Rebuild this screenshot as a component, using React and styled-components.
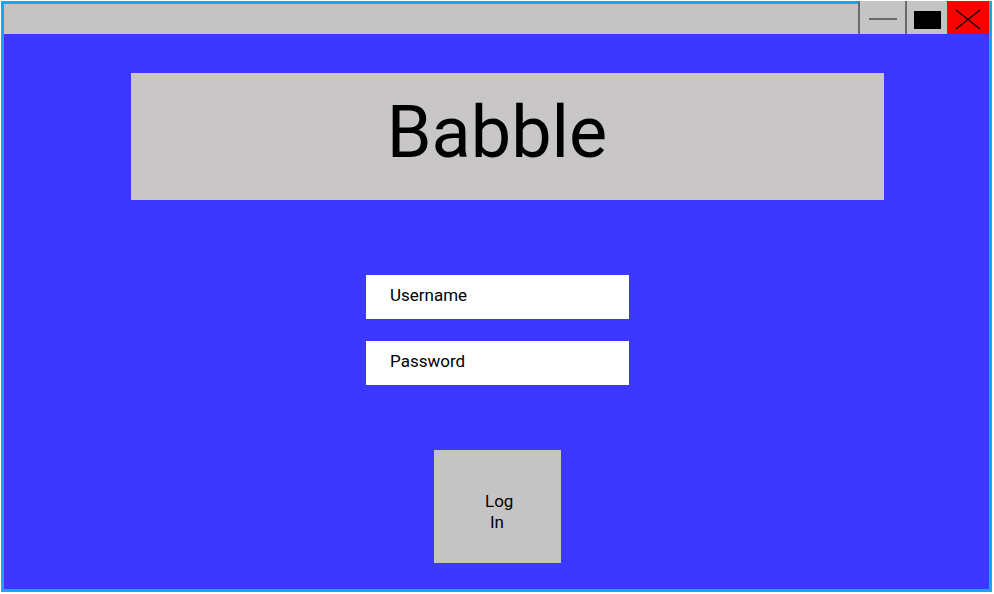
import styled, { createGlobalStyle } from 'styled-components'

const GlobalStyle = createGlobalStyle`
  html, body {
    margin: 0;
    padding: 0;
    background: #ffffff;
  }
  body {
    font-family: Roboto, "Liberation Sans", sans-serif;
  }
`

const Window = styled.div`
  box-sizing: border-box;
  width: 991px;
  height: 591px;
  margin: 1px 0 0 1px;
  border: 3px solid #1ea3f2;
  display: flex;
  flex-direction: column;
`

const TitleBar = styled.div`
  height: 30px;
  flex: none;
  background: #c4c4c4;
  display: flex;
  justify-content: flex-end;
`

const Controls = styled.div`
  display: flex;
  height: 33px;
  margin-top: -3px;
`

const Separator = styled.div`
  width: 2px;
  background: #6a6a6a;
`

const ControlButton = styled.div`
  width: ${p => p.w}px;
  background: ${p => p.bg || '#c4c4c4'};
  display: flex;
  align-items: center;
  justify-content: center;
`

const MinLine = styled.div`
  width: 28px;
  height: 2px;
  margin-top: 3px;
  margin-left: 1px;
  background: #6a6a6a;
`

const MaxBox = styled.div`
  width: 27px;
  height: 18px;
  margin-top: 4px;
  margin-left: 1px;
  background: #000000;
`

const Content = styled.div`
  flex: 1;
  background: #3d38ff;
  display: flex;
  flex-direction: column;
  align-items: center;
`

const Header = styled.div`
  box-sizing: border-box;
  width: 753px;
  height: 127px;
  margin: 39px 0 0 22px;
  padding: 0 21px 8px 0;
  background: #c8c6c7;
  display: flex;
  align-items: center;
  justify-content: center;
  font-size: 72px;
  color: #000000;
`

const Form = styled.form`
  display: flex;
  flex-direction: column;
  align-items: center;
  margin: 75px 0 0 2px;
  gap: 22px;
`

const Field = styled.input`
  box-sizing: border-box;
  width: 263px;
  height: 44px;
  padding: 10px 24px 14px;
  border: 0;
  outline: 0;
  background: #ffffff;
  font-family: Roboto, "Liberation Sans", sans-serif;
  font-size: 17px;
  line-height: 20px;
  color: #000000;
  &::placeholder {
    color: #000000;
    opacity: 1;
  }
`

const LoginButton = styled.button`
  box-sizing: border-box;
  width: 127px;
  height: 113px;
  margin-top: 43px;
  padding: 10px 0 0 56px;
  border: 0;
  background: #c4c4c4;
  font-family: Roboto, "Liberation Sans", sans-serif;
  font-size: 17px;
  line-height: 21px;
  color: #000000;
  display: flex;
  align-items: center;
  justify-content: flex-start;
`

const ButtonLabel = styled.span`
  display: block;
  width: 30px;
  text-align: left;
  text-indent: -5px;
`

const App = () => {
  return (
    <>
      <GlobalStyle />
      <Window>
        <TitleBar>
          <Controls>
            <Separator />
            <ControlButton w={45}>
              <MinLine />
            </ControlButton>
            <Separator />
            <ControlButton w={40}>
              <MaxBox />
            </ControlButton>
            <ControlButton w={42} bg="#ff0000">
              <svg width="42" height="33" viewBox="0 0 42 33">
                <line x1="9" y1="9" x2="33" y2="28" stroke="#000" strokeWidth="1.2" />
                <line x1="33" y1="9" x2="9" y2="28" stroke="#000" strokeWidth="1.2" />
              </svg>
            </ControlButton>
          </Controls>
        </TitleBar>
        <Content>
          <Header>Babble</Header>
          <Form onSubmit={e => e.preventDefault()}>
            <Field type="text" placeholder="Username" />
            <Field type="password" placeholder="Password" />
            <LoginButton type="submit">
              <ButtonLabel>Log In</ButtonLabel>
            </LoginButton>
          </Form>
        </Content>
      </Window>
    </>
  )
}

export default App
